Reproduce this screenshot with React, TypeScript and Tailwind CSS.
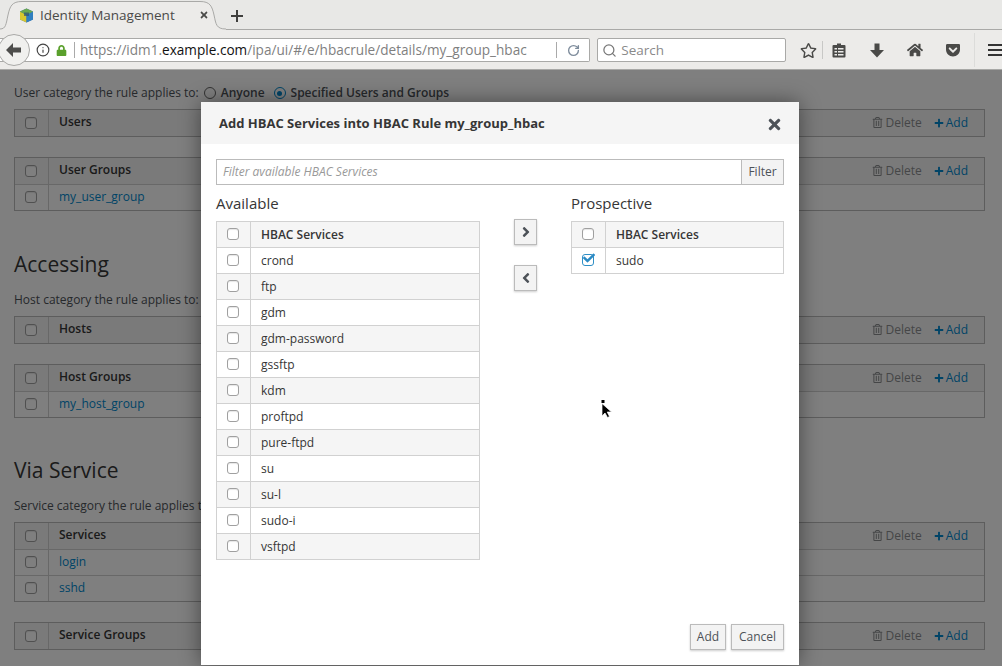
import React from "react";
import { FaAngleLeft, FaAngleRight, FaCheck, FaGetPocket, FaHome, FaLock, FaPlus, FaRegStar, FaRegTrashAlt, FaTimes } from "react-icons/fa";
import { Info, RotateCw, Search } from "lucide-react";

function Box({ checked = false }: { checked?: boolean }) {
  return checked ? (
    <span className="relative block h-[12px] w-[12px] rounded-[3px] border border-[#2f8fc6] bg-white">
      <span className="absolute -top-[3px] left-[0px] text-[#2b8ac4]">
        <FaCheck size={12} />
      </span>
    </span>
  ) : (
    <span className="block h-[12px] w-[12px] rounded-[3px] border border-[#a0a0a0] bg-white shadow-[inset_0_1px_1px_rgba(0,0,0,0.1)]" />
  );
}

function Actions() {
  return (
    <div className="ml-auto flex items-center pb-[1px] pr-[16px] text-[12px] leading-none">
      <span className="flex items-center text-[#8b8d8f]">
        <FaRegTrashAlt size={11} className="mr-[2px]" />
        Delete
      </span>
      <span className="ml-[12px] flex items-center text-[#0088ce]">
        <FaPlus size={10} className="mr-[2px]" />
        Add
      </span>
    </div>
  );
}

function PageTable({ title, rows = [] }: { title: string; rows?: string[] }) {
  return (
    <div className="border border-[#bbb] bg-white text-[12px]">
      <div className="flex h-[26px] items-center bg-[#f5f5f5]">
        <div className="flex h-full w-[34px] items-center justify-center border-r border-[#d1d1d1] pr-[1px]">
          <Box />
        </div>
        <div className="pb-[3px] pl-[10px] font-semibold text-[#363636]">{title}</div>
        <Actions />
      </div>
      {rows.map((r) => (
        <div key={r} className="flex h-[26px] items-center border-t border-[#d1d1d1]">
          <div className="flex h-full w-[34px] items-center justify-center border-r border-[#d1d1d1] pb-[1px] pr-[1px]">
            <Box />
          </div>
          <div className="pb-[2px] pl-[10px] text-[#0088ce]">{r}</div>
        </div>
      ))}
    </div>
  );
}

function Category({ text, full = false }: { text: string; full?: boolean }) {
  return (
    <div className="flex h-[16px] items-center text-[12px] text-[#4d5258]">
      <span>{text}</span>
      {full && (
        <>
          <span className="ml-[5px] mr-[5px] block h-[12px] w-[12px] rounded-full border border-[#666]" />
          <span className="font-semibold text-[#4d5258]">Anyone</span>
          <span className="ml-[9px] mr-[5px] flex h-[12px] w-[12px] items-center justify-center rounded-full border border-[#0088ce]">
            <span className="block h-[5px] w-[5px] rounded-full bg-[#0088ce]" />
          </span>
          <span className="font-semibold text-[#4d5258]">Specified Users and Groups</span>
        </>
      )}
    </div>
  );
}

function Heading({ children }: { children: string }) {
  return <h2 className="text-[21px] leading-[28px] text-[#363636]">{children}</h2>;
}

function Page() {
  return (
    <div className="h-[596px] overflow-hidden bg-white px-[14px] pr-[17px] pt-[15px]">
      <Category text="User category the rule applies to:" full />
      <div className="mt-[8px]"><PageTable title="Users" /></div>
      <div className="mt-[20px]"><PageTable title="User Groups" rows={["my_user_group"]} /></div>
      <div className="mt-[39px]"><Heading>Accessing</Heading></div>
      <div className="mt-[14px]"><Category text="Host category the rule applies to:" /></div>
      <div className="mt-[8px]"><PageTable title="Hosts" /></div>
      <div className="mt-[20px]"><PageTable title="Host Groups" rows={["my_host_group"]} /></div>
      <div className="mt-[38px]"><Heading>Via Service</Heading></div>
      <div className="mt-[14px]"><Category text="Service category the rule applies to:" /></div>
      <div className="mt-[8px]"><PageTable title="Services" rows={["login", "sshd"]} /></div>
      <div className="mt-[20px]"><PageTable title="Service Groups" /></div>
    </div>
  );
}

function ModalTable({ rows, checked = [] }: { rows: string[]; checked?: string[] }) {
  return (
    <div className="border-x border-t border-[#d1d1d1] text-[12px] text-[#363636]">
      <div className="flex h-[26px] items-center border-b border-[#d1d1d1] bg-[#f5f5f5]">
        <div className="flex h-full w-[34px] items-center justify-center border-r border-[#d1d1d1] pb-[1px] pr-[1px]">
          <Box />
        </div>
        <div className="pl-[10px] font-semibold">HBAC Services</div>
      </div>
      {rows.map((r) => (
        <div key={r} className="flex h-[26px] items-center border-b border-[#d1d1d1] odd:bg-[#f5f5f5] even:bg-white">
          <div className="flex h-full w-[34px] items-center justify-center border-r border-[#d1d1d1] pb-[1px] pr-[1px]">
            <Box checked={checked.includes(r)} />
          </div>
          <div className="pl-[10px]">{r}</div>
        </div>
      ))}
    </div>
  );
}

function Btn({ children, className = "" }: { children: React.ReactNode; className?: string }) {
  return (
    <button className={`flex h-[26px] items-center justify-center border border-[#bbb] bg-[#f3f3f3] text-[12px] text-[#4d5258] shadow-[0_1px_2px_rgba(0,0,0,0.2)] ${className}`}>
      {children}
    </button>
  );
}

const available = ["crond", "ftp", "gdm", "gdm-password", "gssftp", "kdm", "proftpd", "pure-ftpd", "su", "su-l", "sudo-i", "vsftpd"];

function Modal() {
  return (
    <div className="absolute left-[201px] top-[102px] flex h-[563px] w-[598px] flex-col bg-white shadow-[0_0_20px_rgba(0,0,0,0.45)]">
      <div className="flex h-[42px] items-center justify-between bg-[#f5f5f5] pl-[18px] pr-[16px]">
        <span className="pt-[1px] text-[13px] font-bold text-[#363636]">Add HBAC Services into HBAC Rule my_group_hbac</span>
        <FaTimes size={17} className="mt-[2px] text-[#4d5258]" />
      </div>
      <div className="flex flex-1 flex-col px-[15px] pt-[15px]">
        <div className="flex h-[26px]">
          <div className="flex flex-1 items-center border border-r-0 border-[#bbb] px-[6px] text-[12px] italic text-[#999]">Filter available HBAC Services</div>
          <div className="flex w-[43px] items-center justify-center border border-[#bbb] bg-[#f3f3f3] text-[12px] text-[#4d5258]">Filter</div>
        </div>
        <div className="flex">
          <div className="w-[264px]">
            <div className="flex h-[36px] items-center text-[15px] text-[#363636]">Available</div>
            <ModalTable rows={available} />
          </div>
          <div className="ml-[34px] flex w-[23px] flex-col pt-[34px]">
            <Btn className="w-[23px]"><FaAngleRight size={16} /></Btn>
            <Btn className="mt-[20px] w-[23px]"><FaAngleLeft size={16} /></Btn>
          </div>
          <div className="ml-[34px] w-[213px]">
            <div className="flex h-[36px] items-center text-[15px] text-[#363636]">Prospective</div>
            <ModalTable rows={["sudo"]} checked={["sudo"]} />
          </div>
        </div>
        <div className="mt-auto flex justify-end gap-[5px] pb-[15px]">
          <Btn className="w-[36px]">Add</Btn>
          <Btn className="w-[53px]">Cancel</Btn>
        </div>
      </div>
    </div>
  );
}

function Favicon() {
  return (
    <svg width="15" height="15" viewBox="0 0 15 15" className="shrink-0">
      <path d="M7.5 0.5 14 3.5v8l-6.5 3-6.5-3v-8z" fill="#3c6ea8" />
      <path d="M1 3.5 7.5 7v7.5l-6.5-3z" fill="#d8c82e" />
      <path d="M14 3.5 7.5 7v7.5l6.5-3z" fill="#2f7fc0" />
      <path d="M7.5 0.5 14 3.5 7.5 7 1 3.5z" fill="#6aa84f" />
      <path d="M5 4.5h5v3.5h-5z" fill="#2b4f78" opacity="0.7" />
    </svg>
  );
}

function TabStrip() {
  return (
    <div className="relative flex h-[30px] items-end border-b border-[#a9a9a7] bg-[#e8e8e6]">
      <div className="absolute left-0 top-0 flex h-[30px] w-[226px] items-center pl-[19px]">
        <svg width="226" height="30" viewBox="0 0 226 30" className="absolute left-0 top-0">
          <path d="M0 29C6 29 6 24 8 15 10 6 12 1.500 22 1.500H200C210 1.500 212 6 214 15 216 24 216 29 226 29V30H0z" fill="#ecebe9" />
          <path d="M0 29C6 29 6 24 8 15 10 6 12 1.500 22 1.500H200C210 1.500 212 6 214 15 216 24 216 29 226 29" fill="none" stroke="#a9a9a7" />
        </svg>
        <span className="relative flex items-center">
          <Favicon />
          <span className="ml-[6px] text-[13.5px] text-[#4a4a48]">Identity Management</span>
          <FaTimes size={10} className="ml-[24px] text-[#4a4a48]" />
        </span>
      </div>
      <svg width="14" height="14" viewBox="0 0 14 14" className="absolute left-[230px] top-[9px]">
        <path d="M7 1v12M1 7h12" stroke="#3f3f3d" strokeWidth="2" />
      </svg>
    </div>
  );
}

function Toolbar() {
  return (
    <div className="relative flex h-[40px] items-center bg-[#ecebe9] shadow-[inset_0_-1px_0_#a8a8a6]">
      <div className="absolute -left-[2px] top-[4px] z-10 flex h-[32px] w-[32px] items-center justify-center rounded-full border border-[#a9a9a7] bg-[#f0f0ee]">
        <svg width="16" height="14" viewBox="0 0 16 14"><path d="M7 0 0 7l7 7V9.500h8v-5H7z" fill="#4d4d4b" /></svg>
      </div>
      <div className="flex h-[24px] w-[591px] items-center rounded-r-[2px] border border-l-0 border-[#a9a9a7] bg-white pl-[36px]">
        <Info size={14} className="text-[#444]" />
        <FaLock size={11} className="ml-[6px] text-[#5aa02c]" />
        <span className="ml-[7px] h-[16px] border-l border-[#aaa]" />
        <span className="ml-[5px] w-[476px] overflow-hidden whitespace-nowrap text-[13.6px] text-[#7f7f7f]">
          https://idm1.<span className="text-[#111]">example.com</span>/ipa/ui/#/e/hbacrule/details/my_group_hbac
        </span>
        <span className="h-[16px] border-l border-[#aaa]" />
        <RotateCw size={13} strokeWidth={2.5} className="ml-[10px] text-[#7e8c9c]" />
      </div>
      <div className="ml-[7px] flex h-[24px] w-[189px] items-center rounded-[2px] border border-[#a9a9a7] bg-white pl-[4px]">
        <Search size={15} className="text-[#777]" />
        <span className="ml-[4px] text-[13.5px] text-[#8a8a8a]">Search</span>
      </div>
      <div className="ml-[14px] flex items-center text-[#4a4a48]">
        <FaRegStar size={17} />
        <span className="ml-[5px] h-[18px] border-l border-[#c8c8c6]" />
        <svg width="14" height="15" viewBox="0 0 14 15" className="ml-[9px]">
          <path d="M5 2V0.500h4V2h3.500a1 1 0 0 1 1 1v10.500a1 1 0 0 1-1 1h-11a1 1 0 0 1-1-1V3a1 1 0 0 1 1-1z" fill="#4a4a48" />
          <path d="M2.500 5h9v1.500h-9zM2.500 8h9v1.500h-9zM2.500 11h9v1.500h-9z" fill="#ecebe9" />
          <path d="M5 4h1v9H5z" fill="#4a4a48" />
        </svg>
        <svg width="14" height="15" viewBox="0 0 14 15" className="ml-[24px]">
          <path d="M4.500 0.500h5V7H14L7 14.500 0 7h4.500z" fill="#4a4a48" />
        </svg>
        <FaHome size={16} className="ml-[23px]" />
        <FaGetPocket size={16} className="ml-[22px]" />
        <span className="ml-[13px] h-[34px] border-l border-[#dcdcda]" />
        <div className="ml-[13px] flex w-[14px] flex-col gap-[3px] overflow-hidden">
          <span className="block h-[2px] w-[14px] bg-[#333]" />
          <span className="block h-[2px] w-[14px] bg-[#333]" />
          <span className="block h-[2px] w-[14px] bg-[#333]" />
        </div>
      </div>
    </div>
  );
}

function Cursor() {
  return (
    <svg width="14" height="20" viewBox="0 0 14 20" className="absolute left-[600px] top-[399px] z-30">
      <rect x="1.500" y="1" width="3" height="3" fill="#000" />
      <path d="M2 4.500V17l3-3 2.500 4.500 2-1L7.200 13H11.500z" fill="#000" stroke="#fff" strokeWidth="0.700" />
    </svg>
  );
}

export default function App() {
  return (
    <div className="relative h-[666px] w-[1002px] overflow-hidden bg-white font-['Open_Sans',sans-serif]">
      <TabStrip />
      <Toolbar />
      <div className="relative">
        <Page />
        <div className="absolute inset-0 bg-black/50" />
      </div>
      <Modal />
      <Cursor />
    </div>
  );
}
